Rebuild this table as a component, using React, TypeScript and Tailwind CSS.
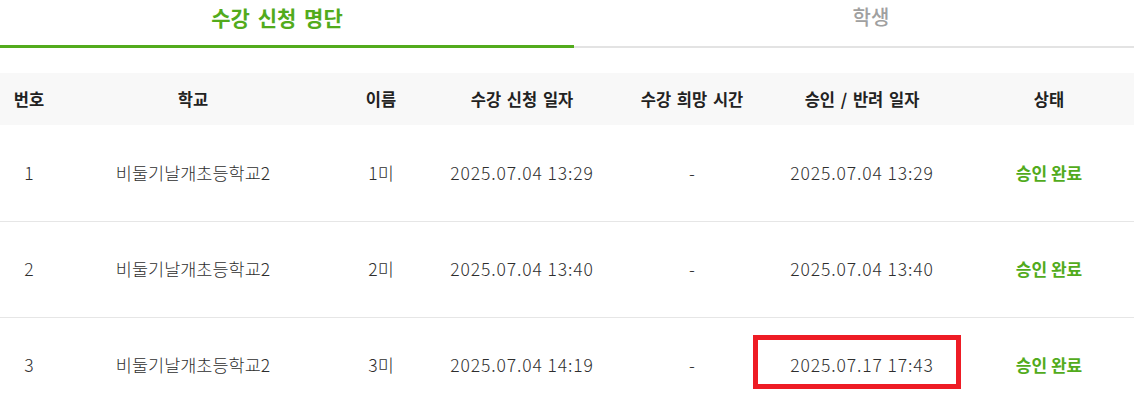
const rows = [
  { no: 1, school: "비둘기날개초등학교2", name: "1미", applied: "2025.07.04 13:29", wish: "-", approved: "2025.07.04 13:29", status: "승인 완료" },
  { no: 2, school: "비둘기날개초등학교2", name: "2미", applied: "2025.07.04 13:40", wish: "-", approved: "2025.07.04 13:40", status: "승인 완료" },
  { no: 3, school: "비둘기날개초등학교2", name: "3미", applied: "2025.07.04 14:19", wish: "-", approved: "2025.07.17 17:43", status: "승인 완료", marked: true },
];

const cols = ["w-[58px]", "w-[270px]", "w-[106px]", "w-[176px]", "w-[164px]", "w-[176px]", "w-[198px]"];

export default function App() {
  return (
    <div className="w-[1134px] h-[407px] overflow-hidden bg-white font-['Noto_Sans_CJK_KR','Noto_Sans',sans-serif]">
      <div className="w-[1148px]">
        {/* tabs */}
        <div className="flex h-[48px]">
          <div className="w-[574px] border-b-[3px] border-[#52ab1c] flex justify-center pr-[20px] pt-[2px]">
            <span className="text-[21px] font-bold text-[#52ab1c] leading-[30px] [word-spacing:3px]">수강 신청 명단</span>
          </div>
          <div className="flex-1 flex flex-col">
            <div className="flex-1 flex justify-center pl-[20px] pt-[2px]">
              <span className="text-[20px] font-medium text-[#a0a0a0] leading-[30px]">학생</span>
            </div>
            <div className="h-[2px] bg-[#e3e3e3]" />
          </div>
        </div>

        <table className="mt-[25px] table-fixed border-collapse w-[1148px]">
          <colgroup>
            {cols.map((c, i) => (
              <col key={i} className={c} />
            ))}
          </colgroup>
          <thead>
            <tr className="h-[52px] bg-[#f8f8f8] text-[16.5px] text-[#222] [word-spacing:2px]">
              <th className="font-semibold">번호</th>
              <th className="font-semibold">학교</th>
              <th className="font-semibold">이름</th>
              <th className="font-semibold">수강 신청 일자</th>
              <th className="font-semibold">수강 희망 시간</th>
              <th className="font-semibold">승인 / 반려 일자</th>
              <th className="font-semibold">상태</th>
            </tr>
          </thead>
          <tbody className="text-[17.5px] font-light text-[#2e2e2e]">
            {rows.map((r) => (
              <tr key={r.no} className="h-[96px] border-b border-[#e6e6e6] text-center">
                <td>{r.no}</td>
                <td>{r.school}</td>
                <td>{r.name}</td>
                <td className="tracking-[0.9px]">{r.applied}</td>
                <td>{r.wish}</td>
                <td className="relative tracking-[0.9px]">
                  {r.approved}
                  {r.marked && (
                    <div className="absolute left-[-21px] right-[-11px] top-[17px] h-[54px] border-[5px] border-[#ee1c25]" />
                  )}
                </td>
                <td className="font-bold text-[17px] text-[#52ab1c]">{r.status}</td>
              </tr>
            ))}
          </tbody>
        </table>
      </div>
    </div>
  );
}
